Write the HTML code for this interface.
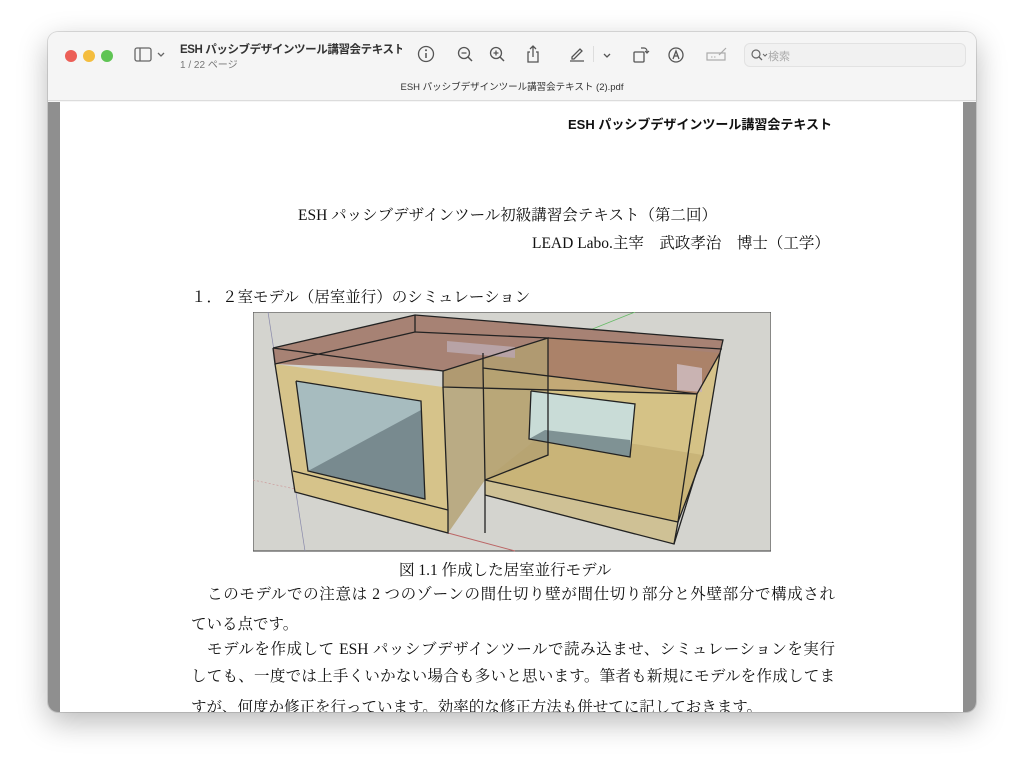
<!DOCTYPE html>
<html><head><meta charset="utf-8">
<style>
*{margin:0;padding:0;box-sizing:border-box}
body{width:1024px;height:776px;background:#fff;position:relative;overflow:hidden;font-family:"Liberation Sans","Noto Sans CJK JP",sans-serif}
.win{position:absolute;left:48px;top:32px;width:928px;height:680px;border-radius:10px;overflow:hidden;background:#f6f6f6;box-shadow:0 10px 30px rgba(0,0,0,.28),0 0 0 1px rgba(0,0,0,.12)}
.tb{position:absolute;left:0;top:0;width:928px;height:69px;background:#f5f5f5;border-bottom:1px solid #dcdcdc}
.dot{position:absolute;top:18px;width:12px;height:12px;border-radius:50%}
.page{position:absolute;left:12px;top:70px;width:903px;height:610px;background:#fff}
.side{position:absolute;top:70px;width:13px;height:610px;background:#8f8f8f}
.s{position:absolute;font-family:"Liberation Serif","Noto Serif CJK JP",serif;font-size:15.5px;color:#111;white-space:nowrap}
.j{position:absolute;left:191px;width:644px;text-align:justify;text-align-last:justify;font-family:"Liberation Serif","Noto Serif CJK JP",serif;font-size:15.5px;color:#111;white-space:nowrap;line-height:20px}
.ic{position:absolute;top:12px}
</style></head><body>
<div class="win">
 <div class="tb">
  <div class="dot" style="left:17px;background:#ec5f57"></div>
  <div class="dot" style="left:35px;background:#f4bd3e"></div>
  <div class="dot" style="left:53px;background:#5fc454"></div>
  <svg class="ic" style="left:86px" width="34" height="22" viewBox="0 0 34 22"><rect x="1" y="4" width="16" height="13" rx="2" fill="none" stroke="#666" stroke-width="1.3"/><line x1="6" y1="4" x2="6" y2="17" stroke="#666" stroke-width="1.3"/><path d="M24 9l3 3 3-3" fill="none" stroke="#666" stroke-width="1.3"/></svg>
  <div style="position:absolute;left:132px;top:9px;width:222px;overflow:hidden;font-size:11.5px;font-weight:bold;color:#333;white-space:nowrap;letter-spacing:-0.4px">ESH パッシブデザインツール講習会テキスト...</div>
  <div style="position:absolute;left:132px;top:24px;font-size:10px;color:#777">1 / 22 ページ</div>
  <svg class="ic" style="left:368px" width="20" height="20" viewBox="0 0 20 20"><circle cx="10" cy="10" r="7.5" fill="none" stroke="#555" stroke-width="1.3"/><line x1="10" y1="9" x2="10" y2="14" stroke="#555" stroke-width="1.5"/><circle cx="10" cy="6.3" r="1" fill="#555"/></svg>
  <svg class="ic" style="left:407px" width="20" height="20" viewBox="0 0 20 20"><circle cx="9" cy="9" r="5.5" fill="none" stroke="#555" stroke-width="1.3"/><line x1="13" y1="13" x2="17" y2="17" stroke="#555" stroke-width="1.5"/><line x1="6.5" y1="9" x2="11.5" y2="9" stroke="#555" stroke-width="1.3"/></svg>
  <svg class="ic" style="left:439px" width="20" height="20" viewBox="0 0 20 20"><circle cx="9" cy="9" r="5.5" fill="none" stroke="#555" stroke-width="1.3"/><line x1="13" y1="13" x2="17" y2="17" stroke="#555" stroke-width="1.5"/><line x1="6.5" y1="9" x2="11.5" y2="9" stroke="#555" stroke-width="1.3"/><line x1="9" y1="6.5" x2="9" y2="11.5" stroke="#555" stroke-width="1.3"/></svg>
  <svg class="ic" style="left:475px" width="20" height="22" viewBox="0 0 20 22"><path d="M7 8H5v10h10V8h-2" fill="none" stroke="#555" stroke-width="1.3"/><path d="M10 13V2M7 5l3-3 3 3" fill="none" stroke="#555" stroke-width="1.3"/></svg>
  <svg class="ic" style="left:519px" width="20" height="20" viewBox="0 0 20 20"><path d="M5 13l8-8 2 2-8 8H5z" fill="none" stroke="#555" stroke-width="1.3"/><line x1="3" y1="17" x2="17" y2="17" stroke="#555" stroke-width="1.3"/></svg>
  <div style="position:absolute;left:545px;top:14px;width:1px;height:16px;background:#ddd"></div>
  <svg class="ic" style="left:552px" width="14" height="20" viewBox="0 0 14 20"><path d="M4 10l3 3 3-3" fill="none" stroke="#555" stroke-width="1.3"/></svg>
  <svg class="ic" style="left:582px" width="22" height="22" viewBox="0 0 22 22"><rect x="4" y="8" width="10" height="10" rx="1" fill="none" stroke="#555" stroke-width="1.3"/><path d="M11 4h3a3 3 0 0 1 3 3v2M15 7l2 2 2-2" fill="none" stroke="#555" stroke-width="1.2"/></svg>
  <svg class="ic" style="left:618px" width="20" height="20" viewBox="0 0 20 20"><circle cx="10" cy="11" r="7" fill="none" stroke="#555" stroke-width="1.3"/><path d="M7 15l3-8 3 8M8 12h4" fill="none" stroke="#555" stroke-width="1.3"/></svg>
  <svg class="ic" style="left:657px" width="24" height="20" viewBox="0 0 24 20"><rect x="2" y="9" width="18" height="7" fill="none" stroke="#aaa" stroke-width="1.2"/><path d="M14 11l7-7" stroke="#aaa" stroke-width="1.2"/><path d="M6 13h6" stroke="#aaa" stroke-dasharray="1.5 1.5"/></svg>
  <div style="position:absolute;left:696px;top:11px;width:222px;height:24px;border:1px solid #e2e2e2;border-radius:6px;background:#f1f1f1"></div>
  <svg style="position:absolute;left:702px;top:16px" width="22" height="14" viewBox="0 0 22 14"><circle cx="6" cy="6" r="4" fill="none" stroke="#666" stroke-width="1.2"/><line x1="9" y1="9" x2="12" y2="12" stroke="#666" stroke-width="1.3"/><path d="M13 6l2 2 2-2" fill="none" stroke="#666" stroke-width="1"/></svg>
  <div style="position:absolute;left:720px;top:16px;font-size:11px;color:#aaa">検索</div>
 </div>
 <div style="position:absolute;left:0;top:47px;width:928px;text-align:center;font-size:9.5px;color:#333">ESH パッシブデザインツール講習会テキスト (2).pdf</div>
 <div class="side" style="left:0"></div>
 <div class="side" style="left:915px"></div>
 <div class="page"></div>
</div>
<div style="position:absolute;left:568px;top:114px;font-size:13px;font-weight:bold;color:#111;font-family:'Liberation Sans','Noto Sans CJK JP',sans-serif">ESH パッシブデザインツール講習会テキスト</div>
<div class="s" style="left:298px;top:203px">ESH パッシブデザインツール初級講習会テキスト（第二回）</div>
<div class="s" style="left:532px;top:231px">LEAD Labo.主宰　武政孝治　博士（工学）</div>
<div class="s" style="left:191px;top:285px">１．２室モデル（居室並行）のシミュレーション</div>
<svg style="position:absolute;left:253px;top:312px" width="518" height="240" viewBox="253 312 518 240">
<rect x="253" y="312" width="518" height="239" fill="#d4d4cf" stroke="#555" stroke-width="1.2"/>
<line x1="268" y1="312" x2="305" y2="551" stroke="#88a" stroke-width=".7"/>
<line x1="253" y1="480" x2="300" y2="490" stroke="#c99" stroke-width=".7" stroke-dasharray="2 2"/>
<line x1="448" y1="533" x2="515" y2="551" stroke="#b66" stroke-width="1"/>
<line x1="590" y1="330" x2="635" y2="312" stroke="#6b6" stroke-width=".8"/>
<polygon points="548,338 720,353 703,455 548,430" fill="#e6d69e"/>
<polygon points="485,480 548,430 703,455 678,522" fill="#bfa86e"/>
<polygon points="273,348 415,315 723,340 720,353 697,394 443,387 443,371 275,364" fill="#9a6a5a" fill-opacity=".78"/>
<polygon points="275,364 443,387 448,533 295,492" fill="#d6c38a"/>
<polygon points="483,368 697,394 703,455 678,522 674,544 485,495" fill="#cdb97c" fill-opacity=".7"/>
<polygon points="443,371 548,338 548,455 485,480 448,533 443,387" fill="#b3a070" fill-opacity=".8"/>
<polygon points="697,394 720,353 703,455" fill="#d6c38a"/>
<polygon points="296,381 421,401 425,499 308,471" fill="#a7bcbf"/>
<polygon points="308,471 421,410 425,499" fill="#788a8f"/>
<polygon points="531,391 635,404 630,457 529,439" fill="#c9dcd7"/>
<polygon points="529,439 630,457 630,440 545,430" fill="#7f9294"/>
<polygon points="447,341 515,347 515,358 447,352" fill="#b8a3a6"/>
<polygon points="677,364 702,368 702,392 677,390" fill="#c9b3b2"/>
<g fill="none" stroke="#222" stroke-width="1.3">
<polyline points="273,348 415,315 723,340 720,353 697,394 443,387 443,371 273,348"/>
<polyline points="415,315 415,332 275,364 273,348"/>
<polyline points="415,332 548,338 722,349"/>
<polyline points="443,387 448,510 448,533 295,492 275,364"/>
<line x1="293" y1="471" x2="448" y2="510"/>
<polyline points="483,353 483,368 485,480 485,533"/>
<polyline points="443,371 548,338 548,455 485,480"/>
<polyline points="485,480 678,522 703,455"/>
<polyline points="485,495 674,544 678,522 697,394"/>
<polyline points="720,353 703,455 697,470 674,544"/>
<polyline points="296,381 421,401 425,499 308,471 296,381"/>
<polyline points="531,391 635,404 630,457 529,439 531,391"/>
<line x1="483" y1="368" x2="697" y2="394"/>
</g>
</svg>
<div class="s" style="left:399px;top:558px">図 1.1 作成した居室並行モデル</div>
<div class="j" style="top:585px">&#12288;このモデルでの注意は 2 つのゾーンの間仕切り壁が間仕切り部分と外壁部分で構成され</div>
<div class="s" style="left:191px;top:612px">ている点です。</div>
<div class="j" style="top:640px">&#12288;モデルを作成して ESH パッシブデザインツールで読み込ませ、シミュレーションを実行</div>
<div class="j" style="top:667px">しても、一度では上手くいかない場合も多いと思います。筆者も新規にモデルを作成してま</div>
<div style="position:absolute;left:60px;top:695px;width:903px;height:17px;overflow:hidden"><div class="s" style="left:131px;top:0">すが、何度か修正を行っています。効率的な修正方法も併せてに記しておきます。</div></div>
</body></html>
